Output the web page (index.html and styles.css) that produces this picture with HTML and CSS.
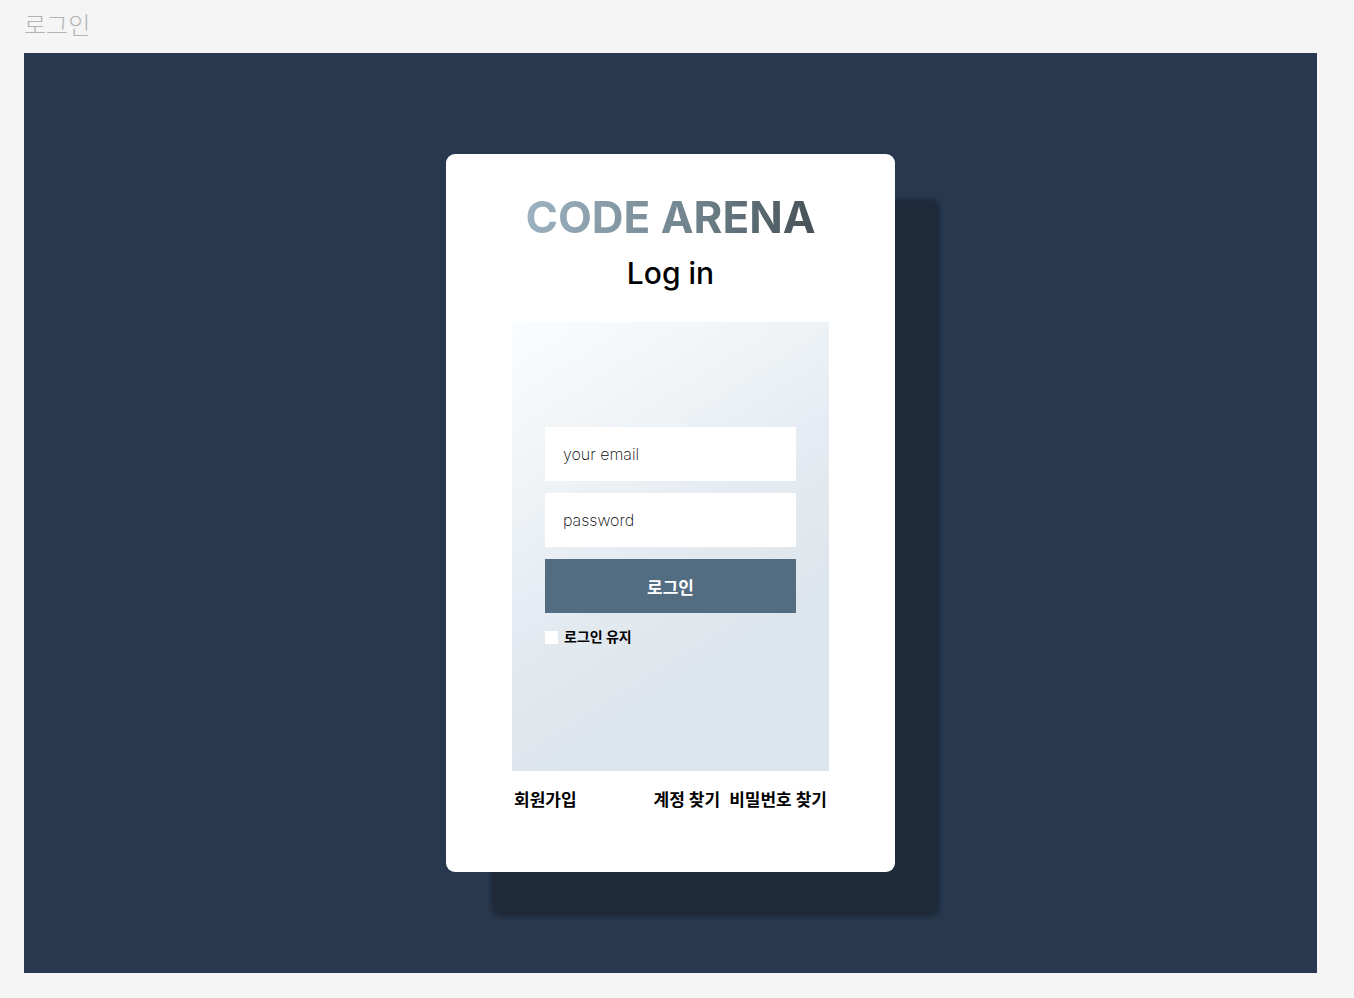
FILE: index.html
```html
<!DOCTYPE html>
<html lang="ko">
<head>
<meta charset="utf-8">
<meta name="viewport" content="width=device-width, initial-scale=1">
<title>로그인</title>
<link rel="stylesheet" href="styles.css">
</head>
<body>
<div class="page">
  <p class="frame-label">로그인</p>
  <main class="stage">
    <section class="card">
      <h1 class="brand">CODE ARENA</h1>
      <h2 class="title">Log in</h2>
      <form class="form">
        <input class="field" type="email" placeholder="your email" aria-label="your email">
        <input class="field" type="password" placeholder="password" aria-label="password">
        <button class="submit" type="submit">로그인</button>
        <label class="keep"><input class="check" type="checkbox">로그인 유지</label>
      </form>
      <nav class="links">
        <a href="#join">회원가입</a>
        <span class="find"><a href="#account">계정 찾기</a><a href="#password">비밀번호 찾기</a></span>
      </nav>
    </section>
  </main>
</div>
</body>
</html>
```
FILE: styles.css
```css
* {
  box-sizing: border-box;
}

body {
  margin: 0;
  background: #f5f5f5;
  color: #000;
  font-family: Inter, "Noto Sans CJK KR", sans-serif;
}

.page {
  display: flex;
  flex-direction: column;
  min-height: 100vh;
  padding: 0 37px 25px 24px;
}

.frame-label {
  margin: 0;
  padding: 9px 0 10px;
  color: #b3b3b3;
  font-size: 24px;
  font-weight: 300;
  line-height: 34px;
}

.stage {
  display: flex;
  flex: 1;
  justify-content: center;
  align-items: flex-start;
  padding: 101px 24px 100px;
  background: #28384e;
}

.card {
  width: 100%;
  max-width: 449px;
  padding: 36px 66px 59px;
  border-radius: 9px;
  background: #fff;
  box-shadow: 45px 45px 4px rgba(0, 0, 0, 0.25);
}

.brand {
  width: max-content;
  margin: 0 auto;
  background: linear-gradient(100deg, #9eb4c2, #72858f 55%, #454f55);
  background-clip: text;
  -webkit-background-clip: text;
  color: transparent;
  font-size: 44px;
  font-weight: 700;
  line-height: 54px;
}

.title {
  margin: 8px 0 28px;
  font-size: 30px;
  font-weight: 500;
  line-height: 42px;
  text-align: center;
}

.form {
  display: flex;
  flex-direction: column;
  gap: 12px;
  min-height: 449px;
  padding: 105px 33px;
  background: linear-gradient(148deg, #fafdff, #ebf0f4 36%, #e6ecf4 45%, #e2e9ef 54%, #dde5ec 74%);
}

.field,
.submit {
  height: 54px;
  border: 0;
  border-radius: 0;
  font-family: inherit;
}

.field {
  padding: 0 18px;
  background: #fff;
  font-size: 16px;
  font-weight: 200;
}

.field::placeholder {
  color: #000;
}

.submit {
  background: #526c81;
  color: #fff;
  font-size: 17px;
  font-weight: 700;
}

.keep {
  display: flex;
  align-items: center;
  gap: 6px;
  font-size: 14px;
  font-weight: 700;
  line-height: 24px;
}

.check {
  width: 13px;
  height: 13px;
  margin: 0;
  appearance: none;
  background: #fff;
}

.check:checked {
  background: #526c81;
}

.links {
  display: flex;
  justify-content: space-between;
  padding: 16px 2px 0;
  font-size: 17px;
  font-weight: 700;
  line-height: 26px;
}

.links a {
  color: inherit;
  text-decoration: none;
}

.find {
  display: flex;
  gap: 9px;
}
```
